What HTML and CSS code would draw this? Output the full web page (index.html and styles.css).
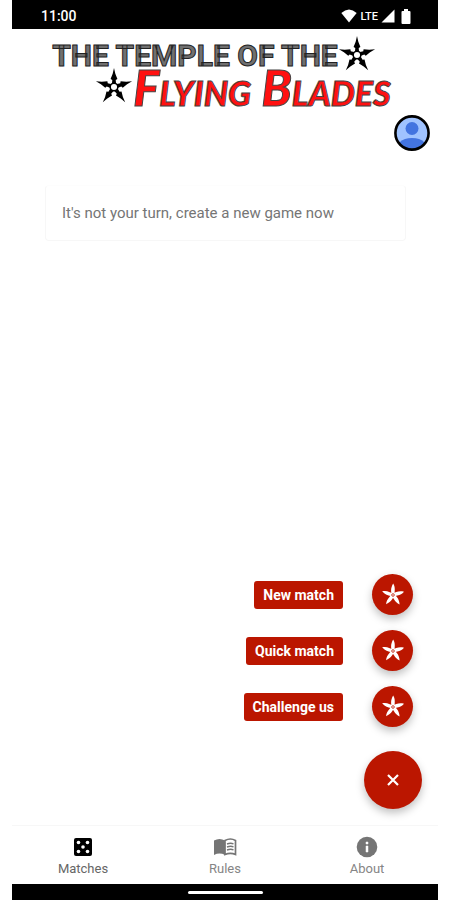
FILE: index.html
```html
<!DOCTYPE html>
<html lang="en">
<head>
    <meta charset="UTF-8">
    <meta name="viewport" content="width=device-width, initial-scale=1.0">
    <title>The Temple of the Flying Blades</title>
    <link rel="stylesheet" href="styles.css">
</head>
<body>
    <svg class="defs" width="0" height="0" aria-hidden="true">
        <symbol id="shuriken" viewBox="-20 -20 40 40">
            <path id="blade" d="M0 -20 L1.4 -14 L3.6 -8.500 L1.8 -7.500 L2.200 -3 L-2.200 -3 L-1.8 -7.500 L-3.6 -8.500 L-1.4 -14 Z"/>
            <use href="#blade" transform="rotate(72)"/>
            <use href="#blade" transform="rotate(144)"/>
            <use href="#blade" transform="rotate(216)"/>
            <use href="#blade" transform="rotate(288)"/>
            <circle r="4" fill="#fff" stroke="#000" stroke-width="1.6"/>
        </symbol>
        <symbol id="star" viewBox="-12 -12 24 24">
            <path id="petal" d="M-1.500 0 L-1.900 -4 C-2 -7 -1 -9.500 .2 -11.500 C1.600 -9 2 -7 1.700 -4 L1.500 0 Z" fill="#fff"/>
            <use href="#petal" transform="rotate(72)"/>
            <use href="#petal" transform="rotate(144)"/>
            <use href="#petal" transform="rotate(216)"/>
            <use href="#petal" transform="rotate(288)"/>
            <circle r="1.3" fill="#fff" stroke="#bb1600" stroke-width=".8"/>
        </symbol>
    </svg>

    <div class="app">
        <div class="status-bar">
            <span class="time">11:00</span>
            <div class="status-icons">
                <svg width="16" height="14" viewBox="0 0 16 14"><path d="M8 13.5 L.3 4 Q8 -3 15.700 4 Z" fill="#fff"/></svg>
                <span class="network">LTE</span>
                <svg width="14" height="14" viewBox="0 0 14 14"><path d="M13.500 .5 V13.500 H.5 Z" fill="#fff"/></svg>
                <svg class="battery" width="10" height="15" viewBox="0 0 10 15"><path d="M3 0 H7 V2 H8.500 Q9.500 2 9.500 3 V14 Q9.500 15 8.500 15 H1.500 Q.5 15 .5 14 V3 Q.5 2 1.500 2 H3 Z" fill="#fff"/></svg>
            </div>
        </div>

        <header class="header">
            <h1 class="logo">
                <span class="logo-top">THE TEMPLE OF THE<svg width="38" height="38"><use href="#shuriken"/></svg></span>
                <span class="logo-bottom"><svg width="38" height="38"><use href="#shuriken"/></svg><span class="flying">Flying Blades</span></span>
            </h1>
            <button type="button" class="profile" aria-label="Profile">
                <svg width="36" height="36" viewBox="0 0 36 36">
                    <clipPath id="face"><circle cx="18" cy="18" r="16"/></clipPath>
                    <circle cx="18" cy="18" r="16.600" fill="#a0c3ff"/>
                    <g clip-path="url(#face)" fill="#4374e0">
                        <circle cx="18" cy="13.500" r="6.500"/>
                        <path d="M6 36 V27 Q10 23 18 23 T30 27 V36 Z"/>
                    </g>
                    <circle cx="18" cy="18" r="16.600" fill="none" stroke="#000" stroke-width="2.600"/>
                </svg>
            </button>
        </header>

        <main class="content">
            <p class="card">It's not your turn, create a new game now</p>

            <div class="actions">
                <button type="button" class="action">
                    <span class="action-label">New match</span>
                    <span class="fab-small"><svg width="24" height="24"><use href="#star"/></svg></span>
                </button>
                <button type="button" class="action">
                    <span class="action-label">Quick match</span>
                    <span class="fab-small"><svg width="24" height="24"><use href="#star"/></svg></span>
                </button>
                <button type="button" class="action">
                    <span class="action-label">Challenge us</span>
                    <span class="fab-small"><svg width="24" height="24"><use href="#star"/></svg></span>
                </button>
                <button type="button" class="fab" aria-label="Close">
                    <svg width="14" height="14" viewBox="0 0 14 14"><path d="M2 2 L12 12 M12 2 L2 12" stroke="#fff" stroke-width="2.200"/></svg>
                </button>
            </div>
        </main>

        <nav class="tabs">
            <a href="#matches" class="tab active">
                <svg width="24" height="24" viewBox="0 0 24 24">
                    <rect x="3" y="3" width="18" height="18" rx="2" fill="#000"/>
                    <g fill="#fff"><circle cx="7.500" cy="7.500" r="1.800"/><circle cx="16.500" cy="7.500" r="1.800"/><circle cx="12" cy="12" r="1.800"/><circle cx="7.500" cy="16.500" r="1.800"/><circle cx="16.500" cy="16.500" r="1.800"/></g>
                </svg>
                Matches
            </a>
            <a href="#rules" class="tab">
                <svg width="24" height="24" viewBox="0 0 24 24">
                    <path d="M1 5.500 Q6.500 2.500 12 5.500 V20 Q6.500 17.200 1 20 Z" fill="#757575"/>
                    <path d="M12 5.500 Q17.500 2.500 22.500 5.500 V19.500 Q17.500 17.200 12 19.500 Z" fill="none" stroke="#757575" stroke-width="1.700"/>
                    <path d="M14 9 Q17.500 7.700 20.500 8.800 M14 12 Q17.500 10.700 20.500 11.800 M14 15 Q17.500 13.700 20.500 14.800" fill="none" stroke="#757575" stroke-width="1.400"/>
                </svg>
                Rules
            </a>
            <a href="#about" class="tab">
                <svg width="24" height="24" viewBox="0 0 24 24">
                    <circle cx="12" cy="12" r="10.300" fill="#757575"/>
                    <path d="M11 7 H13 V9 H11 Z M11 11 H13 V17 H11 Z" fill="#fff" stroke="#fff" stroke-width=".5"/>
                </svg>
                About
            </a>
        </nav>

        <div class="home-bar"><span class="home-line"></span></div>
    </div>
</body>
</html>
```

FILE: styles.css
```css
body, html {
    margin: 0;
    padding: 0;
    font-family: Roboto, "Liberation Sans", sans-serif;
    background-color: #ffffff;
}

.defs {
    position: absolute;
}

.app {
    display: flex;
    flex-direction: column;
    min-height: 100vh;
    margin: 0 12px;
}

button {
    padding: 0;
    border: none;
    background: none;
    font-family: inherit;
    cursor: pointer;
}

svg {
    display: block;
}

.status-bar {
    display: flex;
    justify-content: space-between;
    align-items: center;
    height: 29px;
    padding: 3px 27px 0 29px;
    box-sizing: border-box;
    background-color: #000000;
    color: #ffffff;
}

.time {
    font-size: 14px;
    font-weight: 500;
}

.status-icons {
    display: flex;
    align-items: center;
    gap: 3px;
}

.network {
    font-size: 11px;
    font-weight: 500;
}

.battery {
    margin-left: 3px;
}

.logo {
    margin: 0;
    padding-top: 8px;
    display: flex;
    flex-direction: column;
    align-items: center;
    white-space: nowrap;
}

.logo-top,
.logo-bottom {
    display: flex;
    align-items: center;
}

.logo-top {
    height: 36px;
    padding-right: 22px;
    font-size: 30px;
    font-weight: 700;
    color: #707070;
    -webkit-text-stroke: 1px #222222;
}

.logo-bottom {
    height: 40px;
    margin-top: -6px;
    padding-left: 36px;
    font-family: Lato, "Liberation Sans", sans-serif;
    font-size: 49px;
}

.flying {
    font-style: italic;
    font-weight: 900;
    font-variant: small-caps;
    color: #ff1111;
    -webkit-text-stroke: 1px #444444;
}

.profile {
    display: block;
    margin: 8px 8px 0 auto;
}

.content {
    flex: 1;
    display: flex;
    flex-direction: column;
    padding: 34px 16px 16px 33px;
}

.card {
    margin: 0 16px 0 0;
    padding: 16px;
    border: 1px solid #f7f7f7;
    border-top-color: #fdfdfd;
    border-radius: 4px;
    font-size: 15px;
    line-height: 22px;
    color: #757575;
}

.actions {
    display: flex;
    flex-direction: column;
    align-items: flex-end;
    gap: 15px;
    margin-top: auto;
}

.action {
    display: flex;
    align-items: center;
    gap: 29px;
    margin-right: 9px;
}

.action-label {
    padding: 0 9px;
    border-radius: 3px;
    background-color: #bb1600;
    color: #ffffff;
    font-size: 14px;
    font-weight: 700;
    line-height: 28px;
}

.fab-small,
.fab {
    display: flex;
    justify-content: center;
    align-items: center;
    border-radius: 50%;
    background-color: #bb1600;
    box-shadow: 0 4px 8px rgba(0, 0, 0, 0.25);
}

.fab-small {
    width: 41px;
    height: 41px;
}

.fab {
    width: 58px;
    height: 58px;
    margin-top: 9px;
}

.tabs {
    display: flex;
    border-top: 1px solid #f7f7f7;
}

.tab {
    flex: 1;
    display: flex;
    flex-direction: column;
    align-items: center;
    gap: 2px;
    padding: 9px 0 7px;
    font-size: 13px;
    line-height: 16px;
    color: #858585;
    text-decoration: none;
}

.tab.active {
    color: #666666;
}

.home-bar {
    display: flex;
    justify-content: center;
    align-items: center;
    height: 16px;
    background-color: #000000;
}

.home-line {
    width: 75px;
    height: 3px;
    border-radius: 2px;
    background-color: #ffffff;
}
```
